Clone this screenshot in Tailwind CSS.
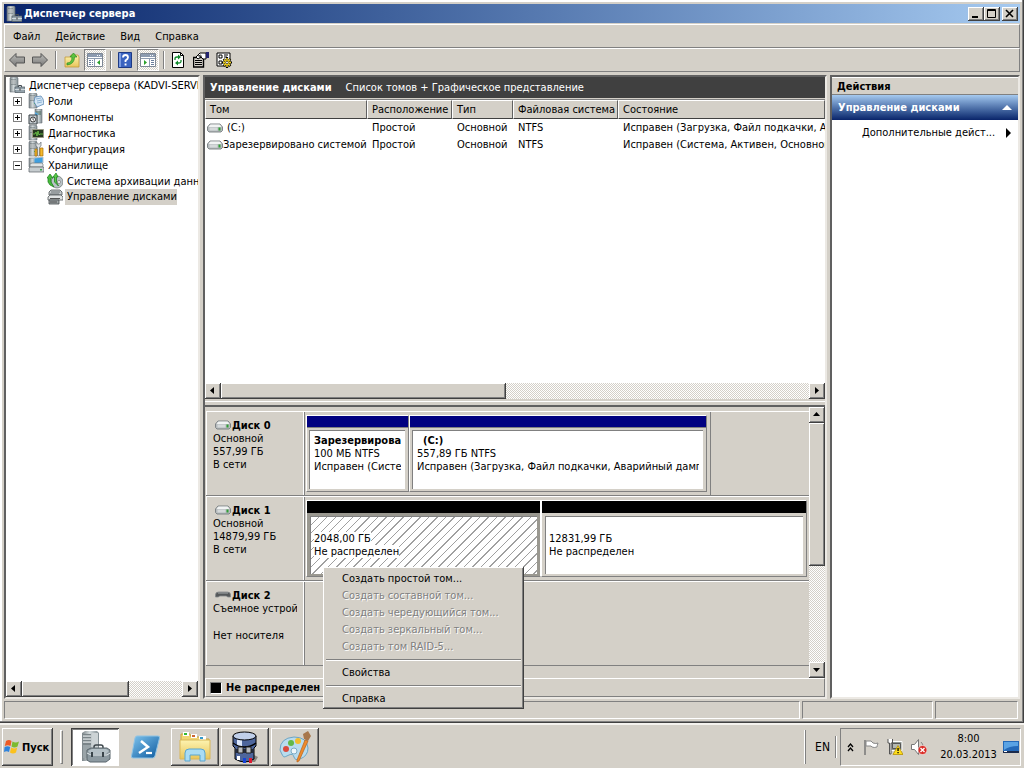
<!DOCTYPE html>
<html lang="ru">
  <head>
    <meta charset="UTF-8" />
    <meta name="viewport" content="width=device-width, initial-scale=1.0" />
    <title>Диспетчер сервера</title>
    <script src="https://cdn.jsdelivr.net/npm/@tailwindcss/browser@4"></script>
  </head>
  <body
    class="h-screen flex flex-col overflow-hidden bg-[#d4d0c8] text-black text-[11px] leading-[13px] font-['Tahoma','DejaVu_Sans_Condensed','DejaVu_Sans',sans-serif] whitespace-nowrap select-none"
  >
    <!-- Иконки -->
    <svg class="absolute size-0" aria-hidden="true">
      <defs>
        <linearGradient id="metal" x1="0" y1="0" x2="1" y2="0">
          <stop offset="0" stop-color="#7b8488" />
          <stop offset=".45" stop-color="#d3dadc" />
          <stop offset="1" stop-color="#7f8b90" />
        </linearGradient>
        <linearGradient id="arrow" x1="0" y1="0" x2="0" y2="1">
          <stop offset="0" stop-color="#bdbdb9" />
          <stop offset="1" stop-color="#777" />
        </linearGradient>
        <linearGradient id="blue" x1="0" y1="0" x2="1" y2="1">
          <stop offset="0" stop-color="#7fc4ee" />
          <stop offset="1" stop-color="#0d5a9e" />
        </linearGradient>
        <linearGradient id="yellow" x1="0" y1="0" x2="0" y2="1">
          <stop offset="0" stop-color="#fdf3b0" />
          <stop offset="1" stop-color="#e8c55a" />
        </linearGradient>
      </defs>
      <symbol id="tower" viewBox="0 0 16 16">
        <path d="M1 1l1-1h6l1 1v14H1z" fill="url(#metal)" stroke="#6b7478" stroke-width=".6" />
        <path d="M2 3h5M2 5h5M2 7h5" stroke="#4f585c" stroke-width=".8" />
        <path d="M2 4h5M2 6h5" stroke="#fff" stroke-width=".6" />
        <path d="M6 10h1v1H6z" fill="#4b4" />
      </symbol>
      <symbol id="server" viewBox="0 0 16 16">
        <use href="#tower" />
        <path d="M9.500 10V8.500h3V10" fill="none" stroke="#444c52" />
        <path d="M6 10h10v5.500H6z" fill="#95a3ac" stroke="#4f5a62" stroke-width=".7" />
        <path d="M6 12.500h10" stroke="#dfe6ea" stroke-width=".8" />
        <path d="M10.500 11.500h1v2h-1z" fill="#333" />
      </symbol>
      <symbol id="roles" viewBox="0 0 16 16">
        <use href="#tower" />
        <path d="M7 4l6-1 2 3 1 5-7 3-3-5z" fill="#d4e6f5" stroke="#5a87b3" stroke-width=".8" />
        <path d="M8 6l5-1M9 8l5-1M9 10l5-1" stroke="#7ba6cd" stroke-width=".8" />
      </symbol>
      <symbol id="features" viewBox="0 0 16 16">
        <path d="M7 0h7v14H7z" fill="url(#metal)" stroke="#6b7478" stroke-width=".6" />
        <path d="M8 3h5M8 5h5" stroke="#465" />
        <path d="M7 3l4 2-4 2z" fill="#58a8dc" />
        <path d="M1 6h8v9H1z" fill="#c4cbd0" stroke="#394045" />
        <circle cx="5" cy="10.500" r="2.500" fill="#fff" stroke="#333" />
        <path d="M5 9v2h1" fill="none" stroke="#222" stroke-width=".7" />
      </symbol>
      <symbol id="diag" viewBox="0 0 16 16">
        <use href="#tower" />
        <path d="M4.500 4.500h11v8h-11z" fill="#24371f" stroke="#9a9a86" />
        <path d="M5 9h2l1-2 1 4 1-5 1 4 1-1h3" fill="none" stroke="#6fd04a" stroke-width=".8" />
      </symbol>
      <symbol id="config" viewBox="0 0 16 16">
        <use href="#tower" />
        <path d="M8 1v4l1.500 1v9h2V6L13 5V1l-1.500 2h-2z" fill="#dfe3e5" stroke="#6c7478" stroke-width=".7" />
        <path d="M7 8h2v7H7zM12 7h3v8h-3z" fill="#f5b92c" stroke="#a86e08" stroke-width=".7" />
      </symbol>
      <symbol id="storage" viewBox="0 0 16 16">
        <path d="M1 1h7v9H1z" fill="url(#metal)" stroke="#6b7478" stroke-width=".6" />
        <path d="M6 1l9-1v6l-9 1z" fill="#3f9fe0" stroke="#b4c3cc" />
        <path d="M2 7l2-1h10l1 1v3H2z" fill="#dfe3e4" stroke="#6f777b" stroke-width=".7" />
        <path d="M1 11l1-1h13l1 1v4H1z" fill="#c6cccf" stroke="#596064" stroke-width=".7" />
        <path d="M12 12h2v1.500h-2z" fill="#3a4" />
      </symbol>
      <symbol id="backup" viewBox="0 0 16 16">
        <circle cx="10" cy="9" r="6" fill="#b9c2c6" stroke="#67716f" stroke-width=".7" />
        <circle cx="12" cy="9" r="1.500" fill="#fff" stroke="#666" stroke-width=".6" />
        <path d="M0 5l3-4 3 4H4v4l3 5-4-2-2-3V5z" fill="#48bb3c" stroke="#187b1a" stroke-width=".7" />
        <path d="M6 4l3-4 2 4H9.500v5l2 4-4-4V4z" fill="#59cc48" stroke="#187b1a" stroke-width=".7" />
      </symbol>
      <symbol id="disks" viewBox="0 0 16 16">
        <path d="M2 3l2-2h9l2 2v3H2z" fill="#c5c9ca" stroke="#4e5457" stroke-width=".8" />
        <path d="M4 3h9M3 5h9" stroke="#62696c" stroke-width=".9" />
        <path d="M1 8l2-2h11l2 2v3H1z" fill="#e1e3e3" stroke="#53595b" stroke-width=".8" />
        <path d="M2 11h10v4H2z" fill="#a0a6a8" stroke="#41474a" stroke-width=".8" />
        <path d="M3 9.500h10M3 13h7" stroke="#444" stroke-width=".9" />
      </symbol>
      <symbol id="drive" viewBox="0 0 16 10">
        <path d="M.5 4l2.500-3h10l2.500 3v3.500l-1.500 1.500H2L.5 7.500z" fill="#b6bbbd" stroke="#777d80" stroke-width=".9" />
        <path d="M1.500 3.500l2-2h9l2 2-1 .5h-11z" fill="#f1f3f3" />
        <path d="M2.500 4.500h8v3h-8z" fill="#d5d9da" />
        <path d="M11.500 4.500h2v3h-2z" fill="#2f9e35" />
      </symbol>
      <symbol id="removable" viewBox="0 0 16 10">
        <path d="M.5 5q0-3 3-3h9q3 0 3 3v2h-3l-1-1h-7l-1 1h-3z" fill="#55585a" stroke="#85898c" stroke-width=".8" />
        <path d="M3 3h10" stroke="#a5a9ab" />
      </symbol>
      <symbol id="toolbox" viewBox="0 0 32 32">
        <path d="M3 2l3-2h12l2 2v25l-3 3H3z" fill="url(#metal)" />
        <path d="M4 3h8v24H4z" fill="#9aa4a8" />
        <path d="M4 4h8M4 7h8M4 10h8M4 13h8" stroke="#5c666a" />
        <path d="M4 5h8M4 8h8M4 11h8" stroke="#edf0f1" />
        <path d="M13 2h6v25h-6z" fill="#ccd3d5" />
        <path d="M15 18v-2q0-2 2-2h5q2 0 2 2v2" fill="none" stroke="#3c464b" stroke-width="1.500" />
        <path d="M8 19l4-2h16l3 2v9l-4 3H11l-3-2z" fill="#8d9aa1" stroke="#5a666d" />
        <path d="M9 20l4-2h14l3 2-3 3H12z" fill="#b4c0c6" />
        <path d="M8 22l4 2h16l3-2" fill="none" stroke="#e4eaed" />
        <path d="M13 21v5M24 21v5" stroke="#39444a" stroke-width="2" />
      </symbol>
    </svg>

    <!-- Окно -->
    <main
      class="flex-1 min-h-0 flex flex-col p-1 shadow-[inset_-1px_-1px_0_#404040,inset_-2px_-2px_0_#808080,inset_0_2px_0_#fff,inset_2px_0_0_#fff]"
    >
      <header
        class="h-[19px] shrink-0 flex items-center bg-linear-to-r from-[#0a246a] to-[#a6caf0] pl-[2px] pr-[2px] text-white font-bold"
      >
        <svg class="size-4 mr-[2px]"><use href="#server" /></svg>
        <h1 class="flex-1">Диспетчер сервера</h1>
        <button
          aria-label="Свернуть"
          class="w-4 h-[14px] bg-[#d4d0c8] shadow-[inset_-1px_-1px_0_#404040,inset_1px_1px_0_#fff,inset_-2px_-2px_0_#808080]"
        >
          <svg viewBox="0 0 16 14"><path d="M4 9h6v2H4z" /></svg>
        </button>
        <button
          aria-label="Развернуть"
          class="w-4 h-[14px] mr-[2px] bg-[#d4d0c8] shadow-[inset_-1px_-1px_0_#404040,inset_1px_1px_0_#fff,inset_-2px_-2px_0_#808080]"
        >
          <svg viewBox="0 0 16 14" fill="none" stroke="#000"><path d="M3.500 2.500h8v8h-8zM3 3.500h9" /></svg>
        </button>
        <button
          aria-label="Закрыть"
          class="w-4 h-[14px] bg-[#d4d0c8] shadow-[inset_-1px_-1px_0_#404040,inset_1px_1px_0_#fff,inset_-2px_-2px_0_#808080]"
        >
          <svg viewBox="0 0 16 14" fill="none" stroke="#000" stroke-width="1.600"><path d="M4 3l7 7M11 3l-7 7" /></svg>
        </button>
      </header>

      <!-- Меню -->
      <nav
        class="mt-px h-6 shrink-0 flex items-center gap-[15px] pl-2 border border-t-white border-l-white border-b-[#808080] border-r-[#808080]"
      >
        <button>Файл</button>
        <button>Действие</button>
        <button>Вид</button>
        <button>Справка</button>
      </nav>

      <!-- Панель инструментов -->
      <div
        class="h-6 shrink-0 flex items-center pl-1 border border-t-white border-l-white border-b-[#808080] border-r-[#808080]"
      >
        <button aria-label="Назад" class="mr-[7px]">
          <svg class="size-4" viewBox="0 0 16 16"><path d="M.5 8L7 1.500V5h8.500v6H7v3.500z" fill="url(#arrow)" stroke="#555" /></svg>
        </button>
        <button aria-label="Вперед">
          <svg class="size-4" viewBox="0 0 16 16"><path d="M15.500 8L9 1.500V5H.5v6H9v3.500z" fill="url(#arrow)" stroke="#555" /></svg>
        </button>
        <span class="w-[2px] h-[18px] mx-[7px] border-l border-l-[#808080] border-r border-r-white"></span>
        <button aria-label="Вверх" class="mr-1">
          <svg class="size-4" viewBox="0 0 16 16">
            <path d="M1 5h5l1-2h7l1 2v10H1z" fill="url(#yellow)" stroke="#c19a3a" stroke-width=".8" />
            <path d="M3 11q5 0 5-6H6l3.500-4L13 5h-2.500q0 7-7.500 8z" fill="#5cc53f" stroke="#2b8a22" stroke-width=".7" />
          </svg>
        </button>
        <button
          aria-label="Дерево консоли"
          class="size-[22px] flex items-center justify-center bg-[repeating-conic-gradient(#fff_0_25%,#d4d0c8_0_50%)] bg-[length:2px_2px] border border-t-[#808080] border-l-[#808080] border-b-white border-r-white"
        >
          <svg class="size-4" viewBox="0 0 16 16">
            <path d="M.5 1.500h15v13H.5z" fill="#fff" stroke="#7d8794" />
            <path d="M1 2h14v3H1z" fill="#8c9bb0" /><path d="M10 3h1v1h-1zM12 3h1v1h-1z" fill="#fff" />
            <path d="M1 6.500h14M7.500 7v7" stroke="#8c9bb0" />
            <path d="M2 8.500h2M5 8.500h1M2 10.500h2M5 10.500h1M2 12.500h2M5 12.500h1" stroke="#6b7f9c" />
            <path d="M13 8v5l-3-2.500z" fill="#2ba02b" />
          </svg>
        </button>
        <span class="w-[2px] h-[18px] ml-1 mr-[5px] border-l border-l-[#808080] border-r border-r-white"></span>
        <button aria-label="Справка" class="mr-1">
          <svg class="size-4" viewBox="0 0 16 16">
            <path d="M1.500.5h13v15h-13z" fill="#3a63c0" stroke="#1e3a84" />
            <path d="M2 1h2v14H2z" fill="#7c9ce2" />
            <path d="M6 5.500Q6 3 8.500 3T11 5.500Q11 7 8.500 8.500V10" fill="none" stroke="#fff" stroke-width="1.800" />
            <path d="M7.600 11.500h1.900v2H7.600z" fill="#fff" />
          </svg>
        </button>
        <button
          aria-label="Панель действий"
          class="size-[22px] flex items-center justify-center bg-[repeating-conic-gradient(#fff_0_25%,#d4d0c8_0_50%)] bg-[length:2px_2px] border border-t-[#808080] border-l-[#808080] border-b-white border-r-white"
        >
          <svg class="size-4" viewBox="0 0 16 16">
            <path d="M.5 1.500h15v13H.5z" fill="#fff" stroke="#7d8794" />
            <path d="M1 2h14v3H1z" fill="#8c9bb0" /><path d="M10 3h1v1h-1zM12 3h1v1h-1z" fill="#fff" />
            <path d="M1 6.500h14M9.500 7v7" stroke="#8c9bb0" />
            <path d="M11 8.500h3M11 10.500h3M11 12.500h3" stroke="#6b7f9c" />
            <path d="M4 8v5l3-2.500z" fill="#2ba02b" />
          </svg>
        </button>
        <span class="w-[2px] h-[18px] ml-1 mr-[5px] border-l border-l-[#808080] border-r border-r-white"></span>
        <button aria-label="Обновить" class="mr-[7px]">
          <svg class="size-4" viewBox="0 0 16 16">
            <path d="M2.500.5h8l3 3v12h-11z" fill="#fff" stroke="#000" />
            <path d="M10.500.5v3h3" fill="none" stroke="#000" />
            <path d="M5 8V6.500Q5 5 7 5h2M11 8v1.500Q11 11 9 11H7" fill="none" stroke="#128a2c" stroke-width="1.300" />
            <path d="M8 2.500L11 5 8 7.500zM8 8.500L5 11l3 2.500z" fill="#128a2c" />
          </svg>
        </button>
        <button aria-label="Свойства" class="mr-[7px]">
          <svg class="size-4" viewBox="0 0 16 16">
            <path d="M.5 5.500h10v9.500H.5z" fill="#d4d0c8" stroke="#000" stroke-width="1.400" />
            <path d="M2 8.500h7M2 10.500h7M2 12.500h7" stroke="#000" />
            <path d="M3 5l4-4h6v6h-3L8 5 5 7z" fill="#fff" stroke="#000" />
            <path d="M5 4l3-1M6 5l3-1" stroke="#000" stroke-width=".8" />
            <path d="M13 0h3v6h-3z" fill="#24246e" />
          </svg>
        </button>
        <button aria-label="Параметры">
          <svg class="size-4" viewBox="0 0 16 16">
            <path d="M1 1h13v13H1z" fill="#fff" stroke="#000" />
            <path d="M3 3h3v3H3zM3 9h3v3H3z" fill="none" stroke="#000" />
            <path d="M8 3h4M8 5h3M7 8h2" stroke="#000" />
            <path d="M11 5v11M6 10.500h10M7.500 7l7 7M14.500 7l-7 7" stroke="#000" stroke-width="2.200" />
            <path d="M11 6v9M7 10.500h8M8 7.500l6 6M14 7.500l-6 6" stroke="#f2d21c" stroke-width="1.500" />
            <circle cx="11" cy="10.500" r="1.300" fill="#fff" stroke="#000" stroke-width=".6" />
          </svg>
        </button>
      </div>

      <div class="mt-[3px] flex-1 min-h-0 flex gap-[3px]">
        <!-- Дерево -->
        <aside
          class="w-[196px] shrink-0 flex flex-col bg-white border-2 border-t-[#606060] border-l-[#606060] border-b-[#ece9e4] border-r-[#ece9e4]"
        >
          <ul class="flex-1 overflow-hidden pl-[3px] [&_li]:h-4 [&_li]:flex [&_li]:items-center [&_svg]:shrink-0">
            <li><svg class="size-4 mr-1"><use href="#server" /></svg>Диспетчер сервера (KADVI-SERVE</li>
            <li class="pl-1">
              <button aria-label="Развернуть Роли" class="size-[9px] mr-[6px] border border-[#808080]"><svg viewBox="0 0 7 7"><path d="M1 3h5v1H1zM3 1h1v5H3z" /></svg></button>
              <svg class="size-4 mr-1"><use href="#roles" /></svg>Роли
            </li>
            <li class="pl-1">
              <button aria-label="Развернуть Компоненты" class="size-[9px] mr-[6px] border border-[#808080]"><svg viewBox="0 0 7 7"><path d="M1 3h5v1H1zM3 1h1v5H3z" /></svg></button>
              <svg class="size-4 mr-1"><use href="#features" /></svg>Компоненты
            </li>
            <li class="pl-1">
              <button aria-label="Развернуть Диагностика" class="size-[9px] mr-[6px] border border-[#808080]"><svg viewBox="0 0 7 7"><path d="M1 3h5v1H1zM3 1h1v5H3z" /></svg></button>
              <svg class="size-4 mr-1"><use href="#diag" /></svg>Диагностика
            </li>
            <li class="pl-1">
              <button aria-label="Развернуть Конфигурация" class="size-[9px] mr-[6px] border border-[#808080]"><svg viewBox="0 0 7 7"><path d="M1 3h5v1H1zM3 1h1v5H3z" /></svg></button>
              <svg class="size-4 mr-1"><use href="#config" /></svg>Конфигурация
            </li>
            <li class="pl-1">
              <button aria-label="Свернуть Хранилище" class="size-[9px] mr-[6px] border border-[#808080]"><svg viewBox="0 0 7 7"><path d="M1 3h5v1H1z" /></svg></button>
              <svg class="size-4 mr-1"><use href="#storage" /></svg>Хранилище
            </li>
            <li class="pl-[38px]"><svg class="size-4 mr-1"><use href="#backup" /></svg>Система архивации данных</li>
            <li class="pl-[38px]"><svg class="size-4 mr-[2px]"><use href="#disks" /></svg><span class="bg-[#d4d0c8] pl-[2px] leading-4">Управление дисками</span></li>
          </ul>
          <div class="h-4 shrink-0 flex bg-[repeating-conic-gradient(#fff_0_25%,#d4d0c8_0_50%)] bg-[length:2px_2px]">
            <button aria-label="Влево" class="size-4 bg-[#d4d0c8] shadow-[inset_-1px_-1px_0_#404040,inset_1px_1px_0_#fff,inset_-2px_-2px_0_#808080]"><svg viewBox="0 0 16 16"><path d="M9 4v7L5 7.500z" /></svg></button>
            <div class="w-[107px] bg-[#d4d0c8] shadow-[inset_-1px_-1px_0_#404040,inset_1px_1px_0_#fff,inset_-2px_-2px_0_#808080]"></div>
            <button aria-label="Вправо" class="size-4 ml-auto bg-[#d4d0c8] shadow-[inset_-1px_-1px_0_#404040,inset_1px_1px_0_#fff,inset_-2px_-2px_0_#808080]"><svg viewBox="0 0 16 16"><path d="M6 4v7l4-3.500z" /></svg></button>
          </div>
        </aside>

        <!-- Управление дисками -->
        <section
          class="flex-1 min-w-0 flex flex-col border-2 border-t-[#606060] border-l-[#606060] border-b-[#ece9e4] border-r-[#ece9e4]"
        >
          <div class="h-[21px] shrink-0 flex items-center gap-[14px] pl-[5px] bg-[#404040] text-white">
            <h2 class="font-bold">Управление дисками</h2>
            <span>Список томов + Графическое представление</span>
          </div>
          <div class="mt-px flex-1 min-h-0 overflow-hidden bg-white border-t border-[#808080]">
            <table
              class="w-full table-fixed border-separate border-spacing-0 text-left [&_td]:h-[17px] [&_td]:p-0 [&_td]:pl-[5px] [&_td]:overflow-hidden [&_th]:h-[19px] [&_th]:p-0 [&_th]:pl-1 [&_th]:font-normal [&_th]:bg-[#d4d0c8] [&_th]:border-t [&_th]:border-t-white [&_th]:border-l [&_th]:border-l-white [&_th]:border-r [&_th]:border-r-[#606060] [&_th]:border-b [&_th]:border-b-[#404040]"
            >
              <colgroup>
                <col class="w-[162px]" />
                <col class="w-[85px]" />
                <col class="w-[61px]" />
                <col class="w-[105px]" />
                <col />
              </colgroup>
              <thead>
                <tr><th>Том</th><th>Расположение</th><th>Тип</th><th>Файловая система</th><th>Состояние</th></tr>
              </thead>
              <tbody>
                <tr>
                  <td><div class="flex items-center gap-1 -ml-[3px]"><svg class="w-4 h-[10px]"><use href="#drive" /></svg>(C:)</div></td>
                  <td>Простой</td><td>Основной</td><td>NTFS</td>
                  <td>Исправен (Загрузка, Файл подкачки, Ав</td>
                </tr>
                <tr>
                  <td><div class="flex items-center -ml-[3px]"><svg class="w-4 h-[10px] shrink-0"><use href="#drive" /></svg>Зарезервировано системой</div></td>
                  <td>Простой</td><td>Основной</td><td>NTFS</td>
                  <td>Исправен (Система, Активен, Основной</td>
                </tr>
              </tbody>
            </table>
          </div>
          <div class="h-4 shrink-0 flex bg-[repeating-conic-gradient(#fff_0_25%,#d4d0c8_0_50%)] bg-[length:2px_2px]">
            <button aria-label="Влево" class="size-4 bg-[#d4d0c8] shadow-[inset_-1px_-1px_0_#404040,inset_1px_1px_0_#fff,inset_-2px_-2px_0_#808080]"><svg viewBox="0 0 16 16"><path d="M9 4v7L5 7.500z" /></svg></button>
            <div class="w-[285px] bg-[#d4d0c8] shadow-[inset_-1px_-1px_0_#404040,inset_1px_1px_0_#fff,inset_-2px_-2px_0_#808080]"></div>
            <button aria-label="Вправо" class="size-4 ml-auto bg-[#d4d0c8] shadow-[inset_-1px_-1px_0_#404040,inset_1px_1px_0_#fff,inset_-2px_-2px_0_#808080]"><svg viewBox="0 0 16 16"><path d="M6 4v7l4-3.500z" /></svg></button>
          </div>
          <div class="h-[6px] mt-[2px] shrink-0 border-t border-t-white border-b-2 border-b-[#606060]"></div>

          <div class="shrink-0 flex">
            <div class="flex-1 min-w-0 pt-1 pb-3 pl-px">
              <!-- Диск 0 -->
              <div class="h-[85px] flex border-t border-t-white border-b border-b-[#808080]">
                <div class="w-[98px] shrink-0 pt-[7px] pl-[6px] pr-[6px] border-l border-l-white border-r border-r-white">
                  <h3 class="flex items-center gap-px pl-[2px] font-bold"><svg class="w-4 h-[10px] mb-[2px]"><use href="#drive" /></svg>Диск 0</h3>
                  <p>Основной</p>
                  <p>557,99 ГБ</p>
                  <p>В сети</p>
                </div>
                <div class="flex-1 flex min-w-0 border-l border-l-[#808080]">
                  <div class="w-[406px] flex pt-[3px] pb-[3px] pl-px pr-[3px] border-r border-r-[#808080]">
                    <div class="w-[103px] flex flex-col border border-t-white border-l-white border-b-[#808080] border-r-[#808080]">
                      <div class="h-3 shrink-0 bg-[#000080] border-b border-b-[#808080]"></div>
                      <div class="flex-1 m-[2px] mr-[3px] pt-[3px] pl-1 pr-1 bg-white border-t border-l border-[#808080]">
                        <div class="overflow-hidden">
                          <h4 class="font-bold">Зарезервирова</h4>
                          <p>100 МБ NTFS</p>
                          <p>Исправен (Систем</p>
                        </div>
                      </div>
                    </div>
                    <div class="flex-1 min-w-0 flex flex-col border border-t-white border-l-white border-b-[#808080] border-r-[#808080]">
                      <div class="h-3 shrink-0 bg-[#000080] border-b border-b-[#808080]"></div>
                      <div class="flex-1 m-[2px] mr-[3px] pt-[3px] pl-1 pr-1 bg-white border-t border-l border-[#808080]">
                        <div class="overflow-hidden">
                          <h4 class="pl-[6px] font-bold">(C:)</h4>
                          <p>557,89 ГБ NTFS</p>
                          <p>Исправен (Загрузка, Файл подкачки, Аварийный дамп п</p>
                        </div>
                      </div>
                    </div>
                  </div>
                </div>
              </div>
              <!-- Диск 1 -->
              <div class="h-[85px] flex border-t border-t-white border-b border-b-[#808080]">
                <div class="w-[98px] shrink-0 pt-[7px] pl-[6px] pr-[6px] border-l border-l-white border-r border-r-white">
                  <h3 class="flex items-center gap-px pl-[2px] font-bold"><svg class="w-4 h-[10px] mb-[2px]"><use href="#drive" /></svg>Диск 1</h3>
                  <p>Основной</p>
                  <p>14879,99 ГБ</p>
                  <p>В сети</p>
                </div>
                <div class="flex-1 flex min-w-0 pt-[3px] pb-[3px] pl-px pr-[2px] border-l border-l-[#808080]">
                  <div class="w-[235px] shrink-0 flex flex-col bg-[#9a9890] border border-white border-b-[#808080]">
                    <div class="h-3 shrink-0 bg-black"></div>
                    <div class="flex-1 m-[3px] mb-[2px] pt-[15px] pl-[3px] border-t border-l border-[#808080] bg-[repeating-linear-gradient(135deg,#fff_0_5px,#a0a0a0_5px_6px)]">
                      <p><span class="bg-white">2048,00 ГБ</span></p>
                      <p><span class="bg-white">Не распределен</span></p>
                    </div>
                  </div>
                  <div class="flex-1 flex flex-col border border-t-white border-l-white border-b-[#808080] border-r-[#808080]">
                    <div class="h-3 shrink-0 bg-black"></div>
                    <div class="flex-1 m-[3px] mb-[2px] pt-[15px] pl-[3px] bg-white border-t border-l border-[#808080]">
                      <p>12831,99 ГБ</p>
                      <p>Не распределен</p>
                    </div>
                  </div>
                </div>
              </div>
              <!-- Диск 2 -->
              <div class="h-[85px] flex border-t border-t-white border-b border-b-[#808080]">
                <div class="w-[98px] shrink-0 pt-[7px] pl-[6px] pr-[6px] border-l border-l-white border-r border-r-white">
                  <h3 class="flex items-center gap-px pl-[2px] font-bold"><svg class="w-4 h-[10px] mb-[2px]"><use href="#removable" /></svg>Диск 2</h3>
                  <p class="overflow-hidden">Съемное устройс</p>
                  <p class="pt-[14px]">Нет носителя</p>
                </div>
                <div class="flex-1 border-l border-l-[#808080]"></div>
              </div>
            </div>
            <div class="w-4 shrink-0 flex flex-col bg-[repeating-conic-gradient(#fff_0_25%,#d4d0c8_0_50%)] bg-[length:2px_2px]">
              <button aria-label="Вверх" class="size-4 bg-[#d4d0c8] shadow-[inset_-1px_-1px_0_#404040,inset_1px_1px_0_#fff,inset_-2px_-2px_0_#808080]"><svg viewBox="0 0 16 16"><path d="M4 9h7L7.500 5z" /></svg></button>
              <div class="h-[143px] bg-[#d4d0c8] shadow-[inset_-1px_-1px_0_#404040,inset_1px_1px_0_#fff,inset_-2px_-2px_0_#808080]"></div>
              <button aria-label="Вниз" class="size-4 mt-auto bg-[#d4d0c8] shadow-[inset_-1px_-1px_0_#404040,inset_1px_1px_0_#fff,inset_-2px_-2px_0_#808080]"><svg viewBox="0 0 16 16"><path d="M4 6h7l-3.500 4z" /></svg></button>
            </div>
          </div>
          <div class="h-[19px] shrink-0 flex items-center gap-1 pl-1 border border-t-white border-l-white border-b-[#808080] border-r-[#808080] font-bold">
            <span class="size-3 bg-black border border-[#808080] border-b-white border-r-white"></span>Не распределен
          </div>
        </section>

        <!-- Действия -->
        <aside
          class="w-[190px] shrink-0 bg-white border-2 border-t-[#606060] border-l-[#606060] border-b-[#ece9e4] border-r-[#ece9e4]"
        >
          <h2 class="h-[18px] leading-[17px] pl-[5px] bg-[#d4d0c8] border-t border-t-white border-b border-b-[#808080] font-bold">Действия</h2>
          <button class="w-full h-[25px] flex items-center justify-between pl-[6px] pr-[6px] bg-linear-to-b from-[#a6caf0] to-[#0a246a] text-white font-bold">
            Управление дисками
            <svg class="w-[10px] h-[5px]" viewBox="0 0 10 5" fill="#fff"><path d="M0 5h10L5 0z" /></svg>
          </button>
          <button class="w-full h-[25px] flex items-center justify-between pl-[30px] pr-[7px]">
            Дополнительные дейст...
            <svg class="w-[5px] h-[10px]" viewBox="0 0 5 10"><path d="M0 0v10l5-5z" /></svg>
          </button>
        </aside>
      </div>

      <!-- Строка состояния -->
      <footer class="mt-[2px] h-[18px] shrink-0 flex gap-[2px] pr-[2px] [&>div]:border [&>div]:border-t-[#808080] [&>div]:border-l-[#808080] [&>div]:border-b-white [&>div]:border-r-white">
        <div class="flex-1"></div>
        <div class="w-[131px]"></div>
        <div class="w-[83px]"></div>
      </footer>
    </main>

    <!-- Контекстное меню -->
    <div
      role="menu"
      class="absolute left-[323px] top-[567px] w-[201px] p-[3px] pb-[2px] bg-[#d4d0c8] shadow-[inset_-1px_-1px_0_#404040,inset_1px_1px_0_#fff,inset_-2px_-2px_0_#808080] [&_button]:block [&_button]:w-full [&_button]:h-[17px] [&_button]:pl-4 [&_button]:text-left [&_button:disabled]:text-[#808080] [&_button:disabled]:text-shadow-[1px_1px_0_#fff] [&_hr]:mt-[4px] [&_hr]:mb-[3px] [&_hr]:h-[2px] [&_hr]:border-t-[#808080] [&_hr]:border-b [&_hr]:border-b-white"
    >
      <button role="menuitem">Создать простой том...</button>
      <button role="menuitem" disabled>Создать составной том...</button>
      <button role="menuitem" disabled>Создать чередующийся том...</button>
      <button role="menuitem" disabled>Создать зеркальный том...</button>
      <button role="menuitem" disabled>Создать том RAID-5...</button>
      <hr />
      <button role="menuitem">Свойства</button>
      <hr />
      <button role="menuitem">Справка</button>
    </div>

    <!-- Панель задач -->
    <div class="h-[45px] shrink-0 flex items-center pt-[3px] pl-[2px] pr-[3px] shadow-[inset_0_2px_0_#f4f2ee]">
      <button class="w-[51px] h-[38px] flex items-center gap-[2px] pl-[2px] font-bold shadow-[inset_-1px_-1px_0_#404040,inset_1px_1px_0_#fff,inset_-2px_-2px_0_#808080]">
        <svg class="size-4 shrink-0" viewBox="0 0 16 16">
          <path d="M2 2q3-2 5.500 0L6.500 7Q4 5.500.8 7z" fill="#ee5a24" />
          <path d="M8.500 2.500q3 2 6.500 0L13.500 7.500q-3 2-6 0z" fill="#7cba2e" />
          <path d="M.6 8q3-1.500 5.600 0L5 13Q2.500 11.500 0 13z" fill="#2f83dc" />
          <path d="M7.200 8.500q3 2 6 0L12 13.500q-3 2-6 0z" fill="#fbc11d" />
        </svg>
        Пуск
      </button>
      <span class="w-[3px] h-[34px] ml-[7px] mr-2 border border-t-white border-l-white border-b-[#808080] border-r-[#808080]"></span>
      <button aria-label="Диспетчер сервера" class="w-12 h-[38px] flex items-center justify-center bg-white shadow-[inset_1px_1px_0_#404040,inset_-1px_-1px_0_#fff,inset_2px_2px_0_#808080]">
        <svg class="size-8"><use href="#toolbox" /></svg>
      </button>
      <button aria-label="PowerShell" class="w-12 h-[38px] ml-[2px] flex items-center justify-center">
        <svg class="size-8" viewBox="0 0 32 32">
          <path d="M8 5h21q2 0 1.500 2L26 25q-.5 2-2.500 2H4q-2 0-1.500-2L6 7q.5-2 2-2z" fill="url(#blue)" stroke="#8fc3e4" />
          <path d="M12 10l7 6-9 6" fill="none" stroke="#fff" stroke-width="2.500" />
          <path d="M17 22h6" stroke="#fff" stroke-width="2.200" />
        </svg>
      </button>
      <button aria-label="Проводник" class="w-12 h-[38px] ml-[2px] flex items-center justify-center shadow-[inset_-1px_-1px_0_#404040,inset_1px_1px_0_#fff,inset_-2px_-2px_0_#808080]">
        <svg class="size-8" viewBox="0 0 32 32">
          <path d="M2 3h9l1 3h9l1 2h8v19H2z" fill="#f0d675" stroke="#c7a440" />
          <path d="M4 1h6v4H4z" fill="#fff" /><path d="M5 2h3v2H5z" fill="#3b3" />
          <path d="M12 3h6v4h-6z" fill="#fff" /><path d="M13 4h3v2h-3z" fill="#c63" />
          <path d="M20 5h7v4h-7z" fill="#fff" /><path d="M21 6h3v2h-3z" fill="#39c" />
          <path d="M1 9h30v19H1z" fill="url(#yellow)" stroke="#d8b758" />
          <path d="M6 30V22q0-4 4-4h12q4 0 4 4v8h-5v-6H11v6z" fill="#a9dcf3" stroke="#5ba6cf" />
        </svg>
      </button>
      <button aria-label="Хранилище" class="w-12 h-[38px] ml-[2px] flex items-center justify-center shadow-[inset_-1px_-1px_0_#404040,inset_1px_1px_0_#fff,inset_-2px_-2px_0_#808080]">
        <svg class="size-8" viewBox="0 0 32 32">
          <path d="M25 24l4 2-3 5H12z" fill="#8b8780" />
          <path d="M4 5v10l2 2v11q10 6 19 0V17l2-2V5z" fill="#4e669c" stroke="#000" />
          <path d="M8 8v7h5V9z" fill="#dbe6fa" />
          <ellipse cx="15.500" cy="5" rx="11.500" ry="4" fill="#c0cfe9" stroke="#000" />
          <path d="M4 12q11 8 23 0" fill="none" stroke="#000" stroke-width="1.500" />
          <path d="M6 18h19v4H6z" fill="#252b3b" />
          <path d="M9 16h5v6H9zM17 16h5v6h-5z" fill="#b9bcc0" stroke="#222" />
          <path d="M8 25h3v4H8z" fill="#fff" />
          <path d="M14 27h3v5h-3z" fill="#1643d8" /><path d="M20 27h3v5h-3z" fill="#e01832" />
        </svg>
      </button>
      <button aria-label="Paint" class="w-12 h-[38px] ml-[2px] flex items-center justify-center shadow-[inset_-1px_-1px_0_#404040,inset_1px_1px_0_#fff,inset_-2px_-2px_0_#808080]">
        <svg class="size-8" viewBox="0 0 32 32">
          <path d="M1 19Q1 7 15 6q13 0 14 11 0 8-8 11-5 2-6-2t-5-2-5 2-4-7z" fill="#b9dcee" stroke="#6da5c4" />
          <circle cx="12" cy="12" r="3" fill="#62b848" /><circle cx="19" cy="10" r="3" fill="#f2bd2f" />
          <circle cx="7" cy="18" r="3" fill="#d94a3d" /><circle cx="15" cy="20" r="3" fill="#eef6fa" stroke="#7dabc4" />
          <path d="M26 9l3 1-9 20-2 1v-2z" fill="#ee8b2d" stroke="#b86218" stroke-width=".7" />
          <path d="M25 8l-1-5 5-3 3 5-3 5z" fill="#a7774c" />
        </svg>
      </button>

      <!-- Область уведомлений -->
      <span class="w-[2px] h-[34px] ml-auto mr-[9px] border-l border-l-white border-r border-r-[#808080]"></span>
      <button class="text-[12px]">EN</button>
      <span class="w-[2px] h-[22px] ml-[5px] mr-[3px] border-l border-l-[#808080] border-r border-r-white"></span>
      <div class="w-[181px] h-[38px] flex items-center pl-[6px] pr-px border border-t-[#808080] border-l-[#808080] border-b-white border-r-white">
        <button aria-label="Показать скрытые значки" class="mr-[9px]">
          <svg class="w-[7px] h-[9px]" viewBox="0 0 7 9" fill="none" stroke="#000" stroke-width="1.300"><path d="M1 4l2.500-3L6 4M1 8l2.500-3L6 8" /></svg>
        </button>
        <button aria-label="Центр поддержки" class="mr-2">
          <svg class="size-4" viewBox="0 0 16 16"><path d="M2 1v15" stroke="#777" stroke-width="1.500" /><path d="M3 2h5l2 2q3 1 5 0-1 3-1 4-3 1-5 0L8 7H3z" fill="#fff" stroke="#888" /></svg>
        </button>
        <button aria-label="Сеть" class="mr-2">
          <svg class="size-4" viewBox="0 0 16 16">
            <path d="M4 2.500h11v9H4z" fill="#8f9691" stroke="#fff" /><path d="M5.500 4.500h8v5h-8z" fill="#b3b8b3" stroke="#555" />
            <path d="M1 0v4h1.500v11H4V4h1.500V0" fill="#fff" stroke="#444" stroke-width=".9" />
            <path d="M11 6.500l5 9H6z" fill="#ffdf1c" stroke="#b69008" stroke-width=".8" /><path d="M10.400 9h1.300v3h-1.300zM10.400 13h1.300v1.200h-1.300z" />
          </svg>
        </button>
        <button aria-label="Звук">
          <svg class="size-4" viewBox="0 0 16 16">
            <path d="M.5 5.500h3l4-5v15l-4-5h-3z" fill="#fff" stroke="#777" />
            <path d="M10 3q2 2 2 4" fill="none" stroke="#888" />
            <circle cx="11.500" cy="11" r="4.500" fill="#d92a24" stroke="#fff" stroke-width=".6" /><path d="M9.500 9l4 4M13.500 9l-4 4" stroke="#fff" stroke-width="1.400" />
          </svg>
        </button>
        <time class="flex-1 pl-[7px] text-center leading-4">8:00<br />20.03.2013</time>
        <button aria-label="Рабочий стол">
          <svg class="size-4" viewBox="0 0 16 16"><path d="M0 2h16v12H0z" fill="#2469b8" /><path d="M1 3h14v4Q6 7 1 11z" fill="#5aa3e4" /><path d="M0 12h16v2H0z" fill="#1b2b4c" /><path d="M1 12h3v1H1z" fill="#fff" /></svg>
        </button>
      </div>
    </div>
  </body>
</html>
